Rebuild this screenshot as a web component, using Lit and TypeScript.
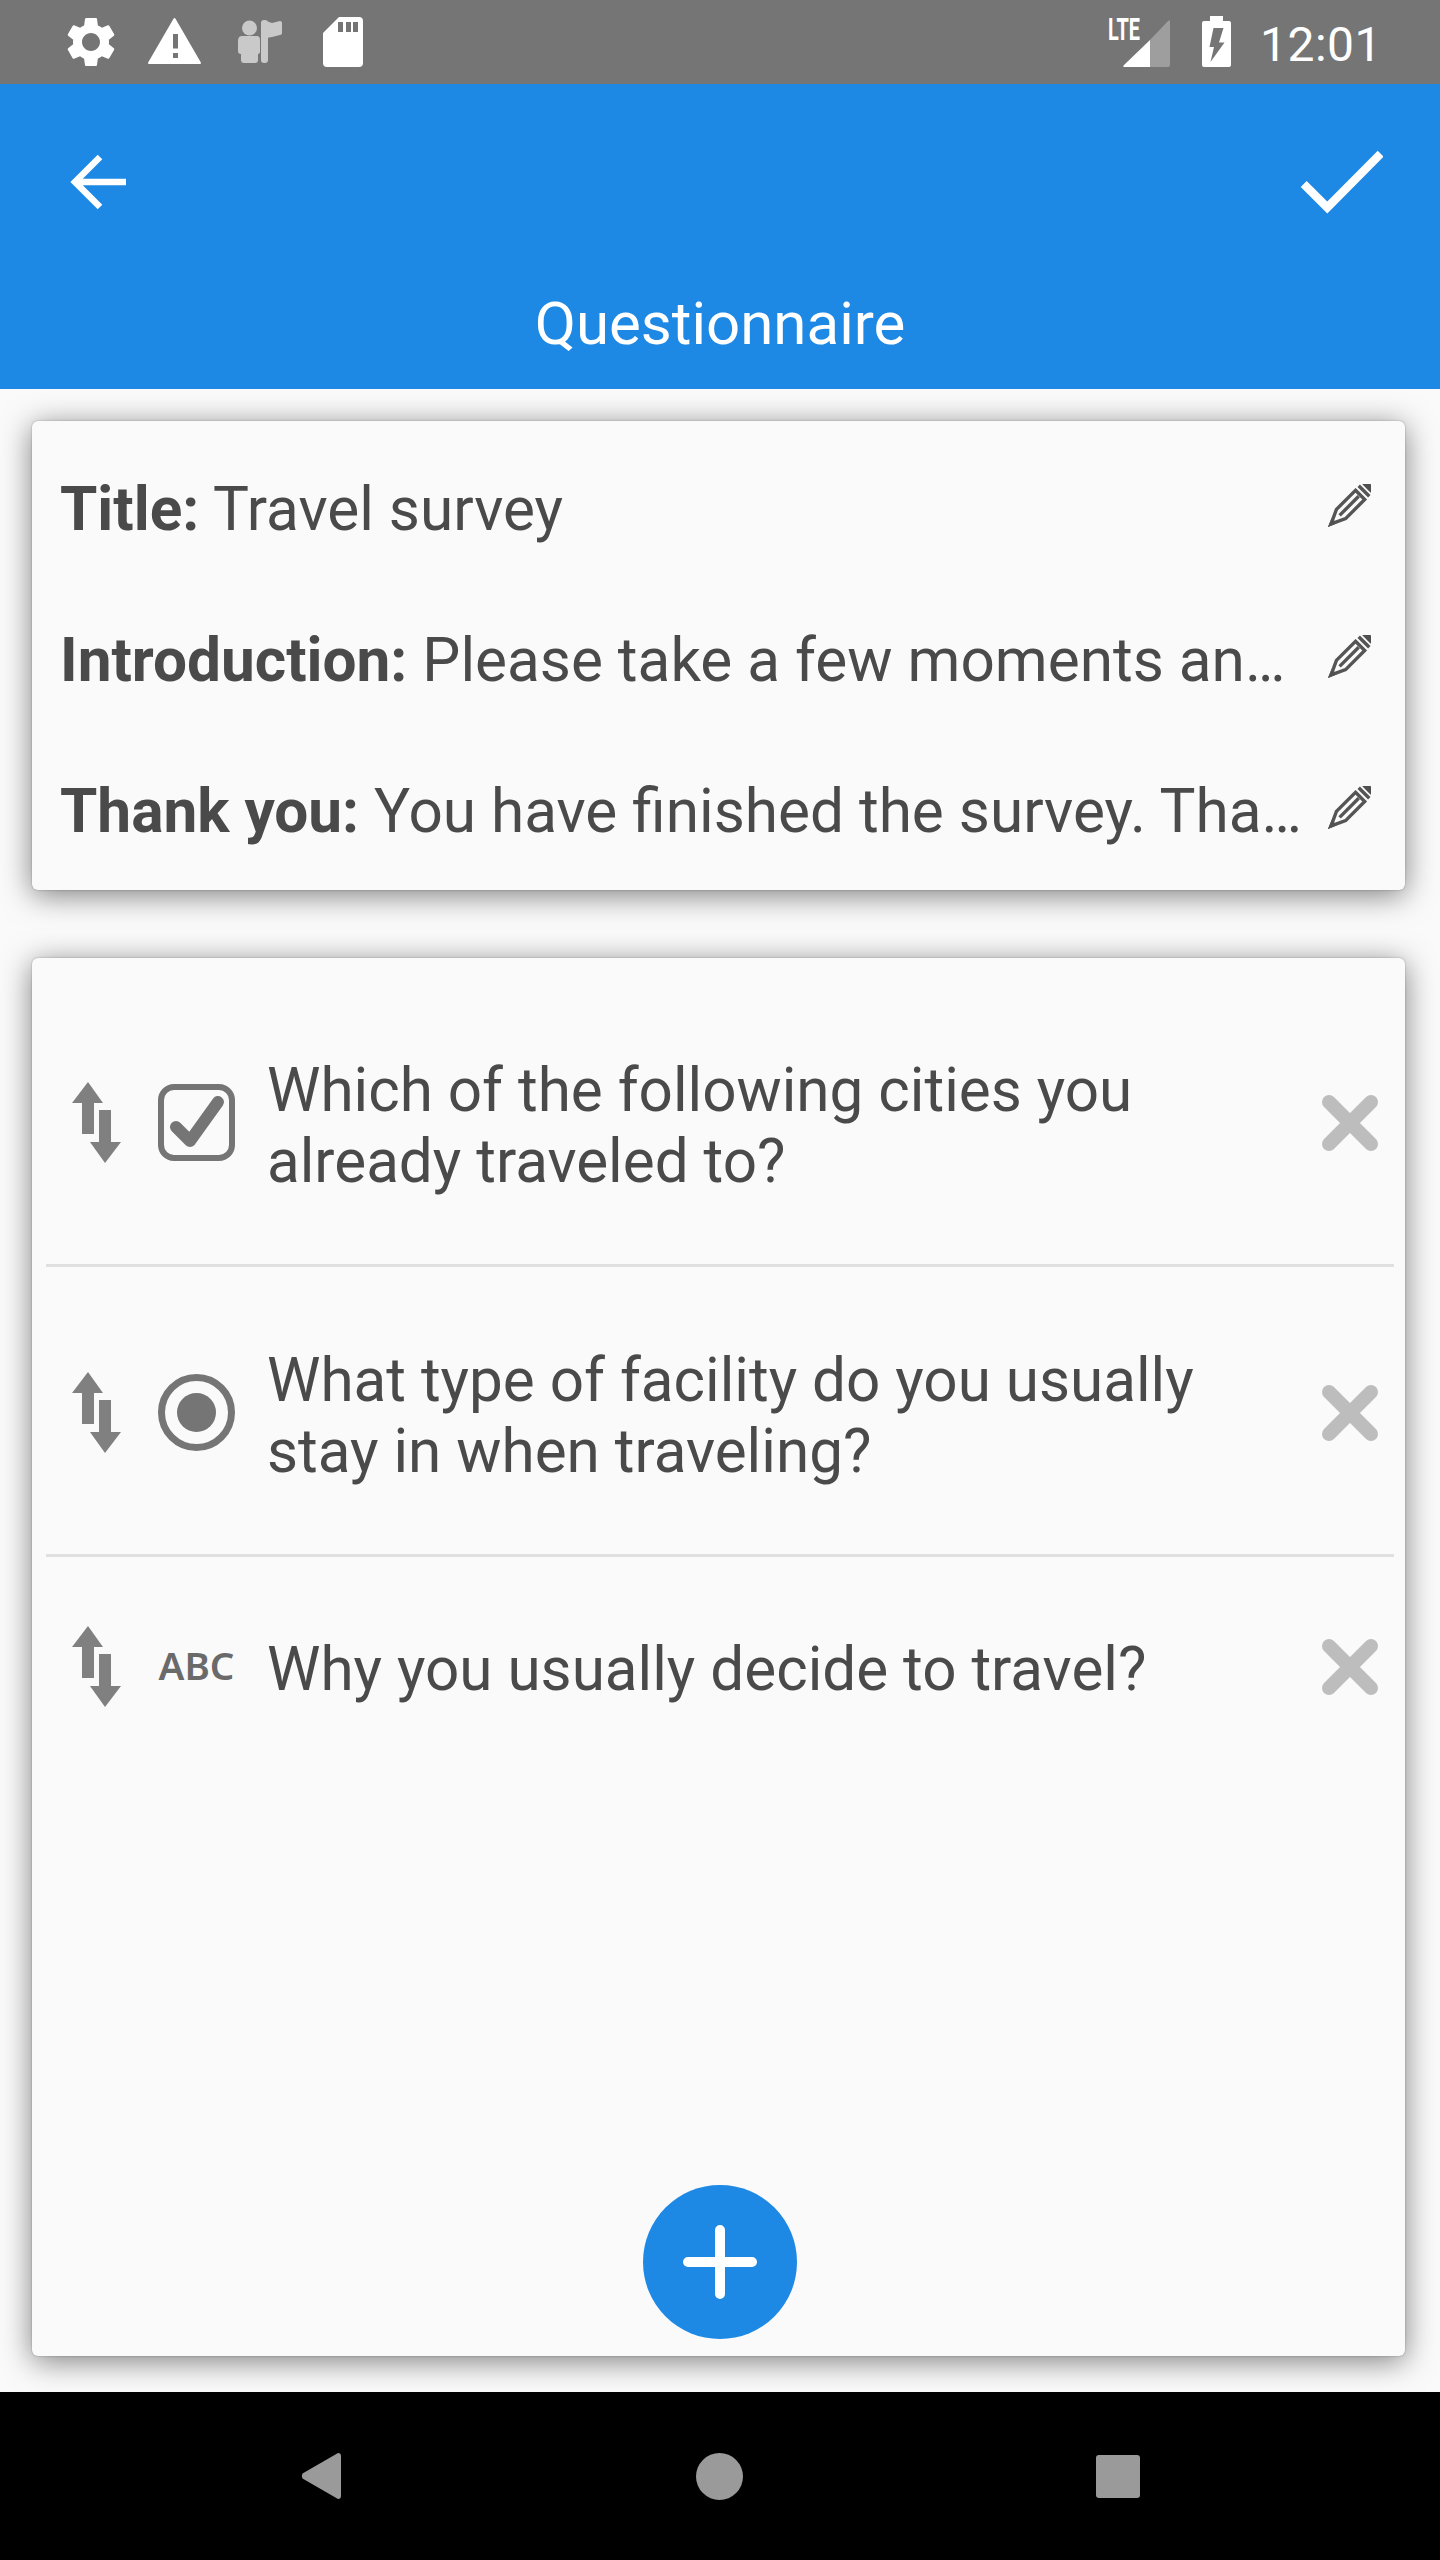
import { LitElement, html, css } from "lit";
import { customElement } from "lit/decorators.js";

const sortIcon = html`<svg class="sort" viewBox="0 0 49 81"><path d="M16 0 31 21H22V52H10V21H0ZM27 28H39V60H49L33 81 18 60H27Z"/></svg>`;
const checkIcon = html`<svg class="type" viewBox="0 0 77 77"><rect x="3" y="3" width="71" height="71" rx="13" fill="none" stroke="#757575" stroke-width="6"/><path d="M18 43 32 57 60 18" fill="none" stroke="#757575" stroke-width="12" stroke-linejoin="round" stroke-linecap="round"/></svg>`;
const radioIcon = html`<svg class="type" viewBox="0 0 77 77"><circle cx="38.5" cy="38.5" r="35" fill="none" stroke="#757575" stroke-width="7"/><circle cx="38.5" cy="38.5" r="19.5" fill="#757575"/></svg>`;
const abcIcon = html`<span class="abc">ABC</span>`;
const closeIcon = html`<svg class="close" viewBox="0 0 56 56"><path d="M7 7 49 49M49 7 7 49" fill="none" stroke="#bdbdbd" stroke-width="14" stroke-linecap="round"/></svg>`;
const pencil = html`<svg class="pencil" viewBox="0 0 43 43"><g transform="translate(21.5 21.5) rotate(45)" fill="none" stroke="#555"><rect x="-7.5" y="-30" width="15" height="6" rx="3" fill="#505050" stroke="none"/><path stroke-width="3.4" d="M-7.5 -20.5H7.5M-6.5 -15H6.5V12L0 26-6.5 12Z"/><path stroke-width="3.4" d="M0 -13V14"/><path d="M-3 22 0 29.5 3 22Z" fill="#505050" stroke-width="1"/></g></svg>`;

const gear = "M19.14 12.94c.04-.3.06-.61.06-.94 0-.32-.02-.64-.07-.94l2.03-1.58c.18-.14.23-.41.12-.61l-1.92-3.32c-.12-.22-.37-.29-.59-.22l-2.39.96c-.5-.38-1.03-.7-1.62-.94l-.36-2.54c-.04-.24-.24-.41-.48-.41h-3.84c-.24 0-.43.17-.47.41l-.36 2.54c-.59.24-1.13.57-1.62.94l-2.39-.96c-.22-.08-.47 0-.59.22L2.74 8.87c-.12.21-.08.47.12.61l2.03 1.58c-.05.3-.09.63-.09.94s.02.64.07.94l-2.03 1.58c-.18.14-.23.41-.12.61l1.92 3.32c.12.22.37.29.59.22l2.39-.96c.5.38 1.03.7 1.62.94l.36 2.54c.05.24.24.41.48.41h3.84c.24 0 .44-.17.47-.41l.36-2.54c.59-.24 1.13-.56 1.62-.94l2.39.96c.22.08.47 0 .59-.22l1.92-3.32c.12-.22.07-.47-.12-.61l-2.01-1.58zM12 15.6c-1.98 0-3.6-1.62-3.6-3.6s1.62-3.6 3.6-3.6 3.6 1.62 3.6 3.6-1.62 3.6-3.6 3.6z";

const meta = [
  { label: "Title:", value: "Travel survey" },
  { label: "Introduction:", value: "Please take a few moments and answer the questions" },
  { label: "Thank you:", value: "You have finished the survey. Thank you for your time" },
];

const questions = [
  { icon: checkIcon, text: "Which of the following cities you already traveled to?" },
  { icon: radioIcon, text: "What type of facility do you usually stay in when traveling?" },
  { icon: abcIcon, text: "Why you usually decide to travel?" },
];

@customElement("app-root")
export class AppRoot extends LitElement {
  static styles = css`
    :host { display: flex; flex-direction: column; width: 1440px; height: 2560px; background: #fafafa;
      font-family: Roboto, "Liberation Sans", sans-serif; color: #4a4a4a; overflow: hidden; }
    svg { display: block; flex: none; }
    .status { display: flex; height: 84px; background: #757575; padding: 0 58px 0 61px; align-items: stretch; flex: none; }
    .status svg { height: 84px; fill: #fff; }
    .s-warn { margin-left: 27px; }
    .s-person { margin-left: 36px; }
    .s-sd { margin-left: 41px; }
    .s-spacer { flex: 1; }
    .s-batt { margin-left: 32px; }
    .clock { margin-left: 29px; color: #fff; font-size: 48px; line-height: 89px; height: 84px; letter-spacing: 0.5px; }
    .ltetext { font-family: Roboto, sans-serif; font-weight: 700; font-size: 31px; fill: #fff; }
    .bar { flex: none; height: 305px; background: #1e88e5; color: #fff; display: flex; flex-direction: column; position: relative; z-index: 1; }
    .bar-row { display: flex; justify-content: space-between; align-items: center; height: 196px; padding: 0 57px 0 70px; }
    .title { text-align: center; font-size: 60px; line-height: 66px; margin-top: 11px; }
    .content { flex: 1; display: flex; flex-direction: column; gap: 68px; padding: 32px 35px 36px 32px; min-height: 0; }
    .card { background: #fafafa; border-radius: 6px; box-shadow: 0 0 2px rgba(0,0,0,.3), 0 5px 30px rgba(0,0,0,.5); }
    .meta { flex: none; padding: 8px 0; }
    .meta-row { display: flex; align-items: center; height: 151px; padding: 0 34px 0 28px; gap: 20px; }
    .meta-text { flex: 1; min-width: 0; font-size: 60.3px; line-height: 70px; padding-top: 10px; white-space: nowrap; overflow: hidden; text-overflow: ellipsis; }
    .meta-text b { font-weight: 700; color: #4a4a4a; }
    .pencil { width: 43px; height: 43px; margin-top: 2px; }
    .questions { flex: 1; display: flex; flex-direction: column; padding: 19px 11px 17px 14px; min-height: 0; }
    .q { display: flex; align-items: center; padding: 71px 16px 67px 26px; border-bottom: 3px solid #e0e0e0; }
    .q:last-of-type { border-bottom: none; padding-top: 69px; }
    .sort { width: 49px; height: 81px; fill: #808080; margin-right: 37px; }
    .type { width: 77px; height: 77px; }
    .type-box { width: 77px; flex: none; display: flex; justify-content: center; margin-right: 32px; }
    .abc { font-family: "Noto Sans", sans-serif; font-weight: 600; font-size: 38.5px; line-height: 77px; color: #6a6a6a; margin-top: -2px; }
    .q-text { flex: 1; font-size: 60.2px; line-height: 70.5px; padding-top: 8px; padding-right: 30px; }
    .close { width: 56px; height: 56px; }
    .fab { margin: auto auto 0; width: 154px; height: 154px; border-radius: 50%; background: #1e88e5; display: flex; align-items: center; justify-content: center; border: none; padding: 0; }
    .nav { flex: none; height: 168px; background: #000; display: flex; align-items: center; padding-left: 301px; position: relative; z-index: 1; }
    .nav svg { fill: #9a9a9a; }
    .home { width: 47px; height: 47px; border-radius: 50%; background: #9a9a9a; margin-left: 355px; }
    .recent { width: 44px; height: 43px; border-radius: 3px; background: #9a9a9a; margin-left: 353px; }
  `;

  render() {
    return html`
      <div class="status">
        <svg viewBox="0 0 60 84" width="60"><g transform="translate(0 12) scale(2.5)"><path d=${gear}/></g></svg>
        <svg class="s-warn" viewBox="148 0 53 84" width="53"><path fill-rule="evenodd" stroke="#fff" stroke-width="2" stroke-linejoin="round" d="M174.5 19 200 63H149ZM172 33H179V49.5H172ZM172 52H179V59H172Z"/></svg>
        <svg class="s-person" viewBox="237 0 45 84" width="45"><g fill="#c9c9c9"><circle cx="249.5" cy="28" r="7.5"/><path d="M242 36H257Q260 36 260 40V52Q260 54 258 54V60Q258 63 255 63H244Q241 63 241 60V54Q238 54 238 51V41Q238 36 242 36Z"/><rect x="261" y="20" width="7" height="43" rx="3"/><path d="M266 21 272 23 280 21Q282 21 282 23V33Q282 35 280 35L272 37 266 38Z"/></g></svg>
        <svg class="s-sd" viewBox="323 0 40 84" width="40"><path fill-rule="evenodd" d="M339 17H359Q363 17 363 21V63Q363 67 359 67H327Q323 67 323 63V33ZM338 22V32H343V22ZM346 22V32H351V22ZM353 22V32H358V22Z"/></svg>
        <div class="s-spacer"></div>
        <svg viewBox="1109 0 62 84" width="62">
          <text class="ltetext" x="1109" y="40" textLength="32" lengthAdjust="spacingAndGlyphs">LTE</text>
          <path d="M1151 40 1169 21Q1171 19 1171 22V65Q1171 67 1169 67H1151Z" fill="#9e9e9e"/>
          <path d="M1151 40V67H1126Q1123 67 1125 65Z"/>
        </svg>
        <svg class="s-batt" viewBox="1203 0 29 84" width="29"><path fill-rule="evenodd" d="M1211 16H1224V21H1230Q1232 21 1232 23V65Q1232 67 1230 67H1205Q1203 67 1203 65V23Q1203 21 1205 21H1211ZM1214.5 28 1210.5 47H1215L1211.5 62 1225.5 42.5H1220L1224.5 28Z"/></svg>
        <div class="clock">12:01</div>
      </div>

      <div class="bar">
        <div class="bar-row">
          <svg width="56" height="56" viewBox="0 0 56 56"><path d="M30 3 5 28 30 53M4 28H56" fill="none" stroke="#fff" stroke-width="6.5"/></svg>
          <svg width="82" height="64" viewBox="1301 150 82 64"><path d="M1303.7 184 1327.3 207.5 1380.7 153.7" fill="none" stroke="#fff" stroke-width="8.4"/></svg>
        </div>
        <div class="title">Questionnaire</div>
      </div>

      <div class="content">
        <div class="card meta">
          ${meta.map((m) => html`
            <div class="meta-row">
              <div class="meta-text"><b>${m.label}</b> ${m.value}</div>
              ${pencil}
            </div>`)}
        </div>
        <div class="card questions">
          ${questions.map((q) => html`
            <div class="q">
              ${sortIcon}
              <div class="type-box">${q.icon}</div>
              <div class="q-text">${q.text}</div>
              ${closeIcon}
            </div>`)}
          <button class="fab">
            <svg width="74" height="74" viewBox="0 0 74 74"><path d="M37 5V69M5 37H69" stroke="#fff" stroke-width="10" stroke-linecap="round"/></svg>
          </button>
        </div>
      </div>

      <div class="nav">
        <svg width="40" height="46" viewBox="0 0 40 46"><path d="M37 0Q40 0 40 3V43Q40 46 37 46L1.5 25.5Q0 23 1.5 20.5Z"/></svg>
        <div class="home"></div>
        <div class="recent"></div>
      </div>
    `;
  }
}
